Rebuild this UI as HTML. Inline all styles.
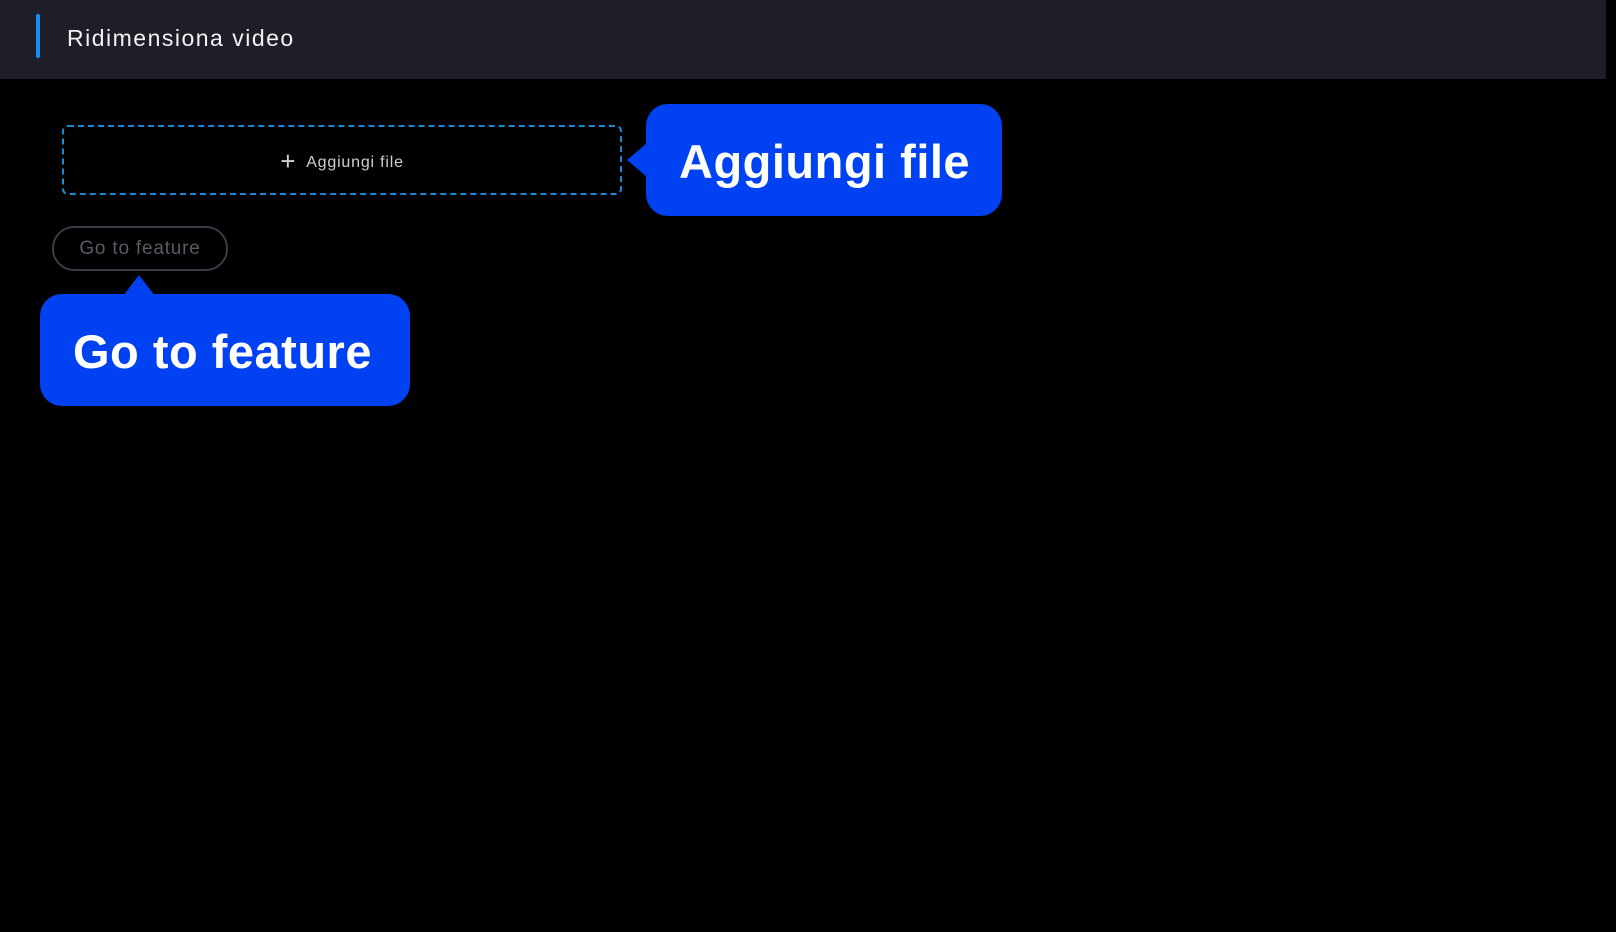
<!DOCTYPE html>
<html><head><meta charset="utf-8"><style>
html,body{margin:0;padding:0;background:#000;width:1616px;height:932px;overflow:hidden;font-family:"Liberation Sans",sans-serif;}
.hdr{position:absolute;left:0;top:0;width:1606px;height:79px;background:#1d1e27;}
.bar{position:absolute;left:36px;top:14px;width:4px;height:44px;border-radius:2px;background:#1a8fe8;}
.title{position:absolute;left:67px;top:24px;font-size:23px;letter-spacing:1.5px;color:#f2f2f2;line-height:28px;}
.drop{position:absolute;left:62px;top:125px;width:556px;height:66px;border:2px dashed #1a8ad8;border-radius:6px;}
.drop span{position:absolute;left:0;right:0;top:19px;text-align:center;color:#d0d0d0;font-size:16px;letter-spacing:0.8px;}
.btn{position:absolute;left:52px;top:226px;width:172px;height:41px;border:2px solid #3a3b45;border-radius:22px;color:#5a5b63;font-size:19px;letter-spacing:0.8px;text-align:center;line-height:41px;}
.tip{position:absolute;background:#0042f2;border-radius:22px;color:#fff;font-weight:bold;font-size:47px;letter-spacing:0.5px;box-sizing:border-box;white-space:nowrap;}
.t1{left:646px;top:104px;width:356px;height:112px;line-height:116px;padding-left:33px;}
.t2{left:40px;top:294px;width:370px;height:112px;line-height:116px;padding-left:33px;}
</style></head><body>
<div class="hdr"><div class="bar"></div><div class="title">Ridimensiona video</div></div>
<div class="drop"><span><span style="position:static;font-size:26px;font-weight:300;vertical-align:-3px;margin-right:10px">+</span>Aggiungi file</span></div>
<div class="btn">Go to feature</div>
<svg style="position:absolute;left:0;top:0" width="1616" height="932">
<polygon points="627,160 647,143 647,177" fill="#0042f2"/>
<polygon points="139,275 123,296 155,296" fill="#0042f2"/>
</svg>
<div class="tip t1">Aggiungi file</div>
<div class="tip t2">Go to feature</div>
</body></html>
